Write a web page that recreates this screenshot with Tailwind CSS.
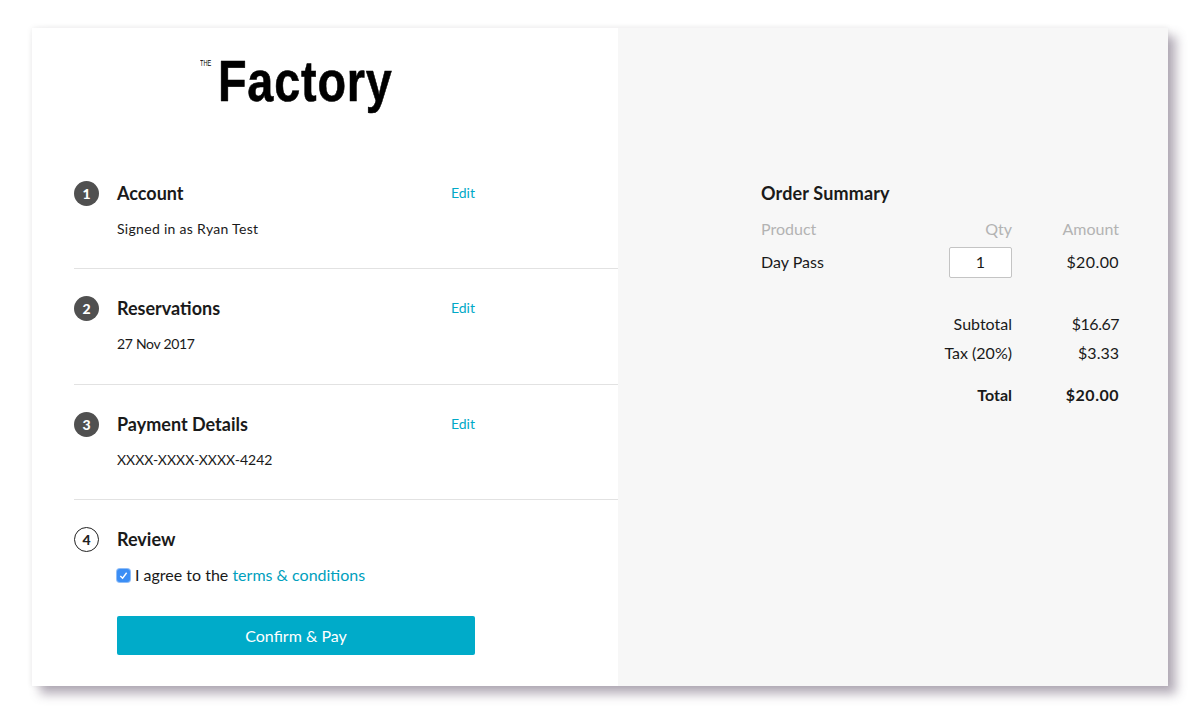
<!DOCTYPE html>
<html lang="en">
<head>
  <meta charset="UTF-8" />
  <title>The Factory - Checkout</title>
  <script src="https://cdn.jsdelivr.net/npm/@tailwindcss/browser@4"></script>
</head>
<body class="bg-white h-[715px] overflow-hidden font-['Lato','Noto_Sans',sans-serif] text-[#1a1a1a]">
  <div class="pt-[28px] pl-[32px]">
    <div class="flex w-[1136px] h-[658px] bg-white shadow-[8px_8px_10px_rgba(90,75,100,0.45),0_0_6px_rgba(0,0,0,0.08)]">

      <!-- Left: checkout steps -->
      <div class="w-[586px] pl-[42px]">
        <div class="h-[125.5px] relative">
          <span class="absolute left-[126px] top-[31px] text-[9px] leading-none origin-left scale-x-[0.62] scale-y-[1.05] font-['Liberation_Sans',sans-serif] text-black">THE</span>
          <span class="absolute left-[144px] top-[18px] text-[57px] leading-[70px] font-bold tracking-[1px] origin-left scale-x-[0.82] [-webkit-text-stroke:0.6px_black] font-['Liberation_Sans',sans-serif] text-black">Factory</span>
        </div>

        <section class="h-[115.5px] pt-[27px] border-b border-[#e2e2e2]">
          <div class="flex items-center h-[25px] w-[401px]">
            <span class="w-[25px] h-[25px] rounded-full bg-[#505050] text-white text-[14px] font-black flex items-center justify-center">1</span>
            <h2 class="ml-[18px] text-[18px] font-bold flex-1">Account</h2>
            <a class="text-[14px] text-[#00a9c7] mb-[2px]">Edit</a>
          </div>
          <p class="ml-[43px] mt-[12px] text-[14px] leading-[22px] tracking-[0.3px]">Signed in as Ryan Test</p>
        </section>

        <section class="h-[115.5px] pt-[27px] border-b border-[#e2e2e2]">
          <div class="flex items-center h-[25px] w-[401px]">
            <span class="w-[25px] h-[25px] rounded-full bg-[#505050] text-white text-[14px] font-black flex items-center justify-center">2</span>
            <h2 class="ml-[18px] text-[18px] font-bold flex-1">Reservations</h2>
            <a class="text-[14px] text-[#00a9c7] mb-[2px]">Edit</a>
          </div>
          <p class="ml-[43px] mt-[12px] text-[14px] leading-[22px] tracking-[-0.3px]">27 Nov 2017</p>
        </section>

        <section class="h-[115.5px] pt-[27px] border-b border-[#e2e2e2]">
          <div class="flex items-center h-[25px] w-[401px]">
            <span class="w-[25px] h-[25px] rounded-full bg-[#505050] text-white text-[14px] font-black flex items-center justify-center">3</span>
            <h2 class="ml-[18px] text-[18px] font-bold flex-1">Payment Details</h2>
            <a class="text-[14px] text-[#00a9c7] mb-[2px]">Edit</a>
          </div>
          <p class="ml-[43px] mt-[12px] text-[14px] leading-[22px]">XXXX-XXXX-XXXX-4242</p>
        </section>

        <section class="pt-[27px]">
          <div class="flex items-center h-[25px] w-[401px]">
            <span class="w-[25px] h-[25px] rounded-full bg-white border border-[#222] text-[#222] text-[14px] font-black flex items-center justify-center">4</span>
            <h2 class="ml-[18px] text-[18px] font-bold flex-1">Review</h2>
          </div>
          <div class="ml-[43px] mt-[11px] flex items-center h-[24px] text-[16px]">
            <span class="w-[13px] h-[13px] rounded-[3px] bg-[#3b8ef5] ring-1 ring-[#8fbdf8] flex items-center justify-center">
              <svg width="9" height="9" viewBox="0 0 10 10" fill="none" stroke="white" stroke-width="1.6"><path d="M1.5 5.5 L4 8 L8.5 2"/></svg>
            </span>
            <span class="ml-[5px]">I agree to the <a class="text-[#00a0bd]">terms &amp; conditions</a></span>
          </div>
          <button class="block ml-[43px] mt-[29px] w-[358px] h-[39px] rounded-[2px] bg-[#00abc9] text-white text-[16px]">Confirm &amp; Pay</button>
        </section>
      </div>

      <!-- Right: order summary -->
      <div class="w-[550px] bg-[#f7f7f7] pl-[143px] pt-[153px] text-[16px]">
        <div class="w-[358px]">
          <h2 class="text-[18px] font-bold leading-[25px] tracking-[0.15px]">Order Summary</h2>
          <div class="flex items-center mt-[12px] h-[22px] text-[#b3b3b3]">
            <span class="flex-1">Product</span>
            <span class="w-[62px] text-right">Qty</span>
            <span class="w-[107px] text-right">Amount</span>
          </div>
          <div class="flex items-center mt-[6px] h-[32px]">
            <span class="flex-1">Day Pass</span>
            <span class="w-[63px] h-[31px] bg-white border border-[#c4c4c4] rounded-[2px] flex items-center justify-center">1</span>
            <span class="w-[107px] text-right tracking-[0.4px]">$20.00</span>
          </div>
          <div class="flex items-center mt-[35px] h-[22px]">
            <span class="flex-1 text-right">Subtotal</span>
            <span class="w-[107px] text-right tracking-[-0.5px]">$16.67</span>
          </div>
          <div class="flex items-center mt-[6.5px] h-[22px]">
            <span class="flex-1 text-right">Tax (20%)</span>
            <span class="w-[107px] text-right">$3.33</span>
          </div>
          <div class="flex items-center mt-[20.5px] h-[22px] font-bold">
            <span class="flex-1 text-right">Total</span>
            <span class="w-[107px] text-right tracking-[0.5px]">$20.00</span>
          </div>
        </div>
      </div>
    </div>
  </div>
</body>
</html>
